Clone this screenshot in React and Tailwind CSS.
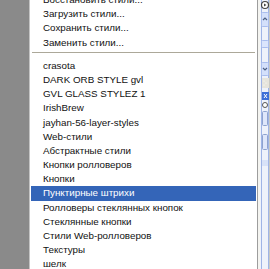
const topItems = ['Восстановить стили...', 'Загрузить стили...', 'Сохранить стили...', 'Заменить стили...']

const styleItems = [
  'crasota',
  'DARK ORB STYLE gvl',
  'GVL GLASS STYLEZ 1',
  'IrishBrew',
  'jayhan-56-layer-styles',
  'Web-стили',
  'Абстрактные стили',
  'Кнопки ролловеров',
  'Кнопки',
  'Пунктирные штрихи',
  'Ролловеры стеклянных кнопок',
  'Стеклянные кнопки',
  'Стили Web-ролловеров',
  'Текстуры',
  'шелк',
]

function MenuRow({ label, active }) {
  return (
    <div
      className={`mx-[1px] h-[14.2px] shrink-0 whitespace-nowrap pl-[12px] leading-[14.2px] ${
        active ? 'bg-[#3465b8] text-white' : 'text-[#111]'
      }`}
    >
      {label}
    </div>
  )
}

function ScrollStrip() {
  return (
    <svg width="12" height="269" viewBox="0 0 12 269" className="block">
      <rect x="0" y="0" width="12" height="269" fill="#eef2fb" />
      <rect x="0" y="0" width="2" height="269" fill="#f4f4f0" />
      <rect x="3" y="0" width="1" height="269" fill="#9fb4e6" />
      <rect x="10" y="0" width="1" height="269" fill="#9fb4e6" />
      <rect x="11" y="0" width="1" height="269" fill="#c9c9c4" />
      {/* round button */}
      <circle cx="7" cy="5" r="3.5" fill="#fff" stroke="#444" strokeWidth="1.2" />
      <path d="M6 3.5 L8.5 5 L6 6.5 Z" fill="#444" />
      {/* up arrow */}
      <rect x="3.5" y="12.5" width="7" height="14" rx="1" fill="#d4e0fb" stroke="#a9bdee" />
      <path d="M5 20 L7 18 L9 20" fill="none" stroke="#4d6185" strokeWidth="1.2" />
      <rect x="3.5" y="40.5" width="7" height="7" rx="1" fill="#dbe5fc" stroke="#a9bdee" />
      {/* down arrow */}
      <rect x="3.5" y="62.5" width="7" height="13" rx="1" fill="#d4e0fb" stroke="#a9bdee" />
      <path d="M5 68 L7 70 L9 68" fill="none" stroke="#4d6185" strokeWidth="1.2" />
      <rect x="4" y="78" width="7" height="10" fill="#e6e4dc" />
      <circle cx="6" cy="81" r="0.6" fill="#fff" />
      <circle cx="8" cy="83" r="0.6" fill="#fff" />
      <circle cx="6" cy="85" r="0.6" fill="#fff" />
      {/* blue close box */}
      <rect x="4" y="92" width="7" height="8" fill="#3c6fd8" />
      <path d="M6 94 L9 98 M9 94 L6 98" stroke="#fff" strokeWidth="1" />
      <circle cx="7" cy="105" r="2.5" fill="#fff" stroke="#555" />
      <rect x="4.5" y="111.5" width="5" height="14" rx="1" fill="#dfe7fb" stroke="#8ea3cf" />
      <rect x="4.5" y="134.5" width="5" height="15" rx="1" fill="#dfe7fb" stroke="#8ea3cf" />
      <rect x="4" y="160" width="6" height="6" fill="#d8e2f8" />
    </svg>
  )
}

export default function App() {
  return (
    <div
      className="flex h-[269px] w-[270px] overflow-hidden bg-white text-[9.8px]"
      style={{ fontFamily: '"Liberation Sans", Arial, sans-serif' }}
    >
      <div className="w-[29px] shrink-0 bg-[#8a8a8a]" />
      <div className="w-[1px] shrink-0 bg-[#c4c4c4]" />
      <div className="flex w-[227px] shrink-0 flex-col bg-white">
        <div className="-mt-[7px] flex flex-col">
          {topItems.map((item) => (
            <MenuRow key={item} label={item} />
          ))}
          <div className="h-[9px] shrink-0 pt-[2px]">
            <div className="mx-[2px] h-[1px] bg-[#aca899]" />
          </div>
          {styleItems.map((item) => (
            <MenuRow key={item} label={item} active={item === 'Пунктирные штрихи'} />
          ))}
        </div>
      </div>
      <div className="w-[1px] shrink-0 bg-[#9d9d9d]" />
      <ScrollStrip />
    </div>
  )
}
